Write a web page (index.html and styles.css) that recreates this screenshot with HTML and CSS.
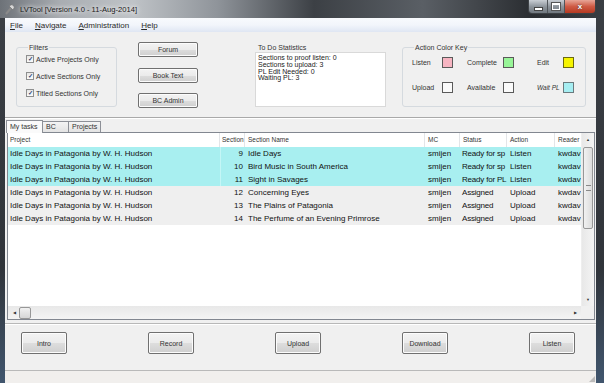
FILE: index.html
```html
<html>
  <head>
    <title>LVTool</title>
    <link rel="stylesheet" href="styles.css">
  </head>
  <body>
    <div class="window">
      <div class="titlebar">
        <svg class="app-icon" width="10" height="11" viewBox="0 0 10 11">
          <path d="M1 10 L6 4" stroke="#8a8a8a" stroke-width="2"/>
          <path d="M4 2 L7 0.5 L9.5 3 L8 6 Z" fill="#d8d8d8" stroke="#6a6a6a" stroke-width="0.6"/>
        </svg>
        <span class="title">LVTool [Version 4.0 - 11-Aug-2014]</span>
        <div class="win-buttons">
          <span class="wb wb-min"><i></i></span>
          <span class="wb wb-max"><i></i></span>
          <span class="wb wb-close">x</span>
        </div>
      </div>

      <div class="menubar">
        <span><u>F</u>ile</span>
        <span><u>N</u>avigate</span>
        <span><u>A</u>dministration</span>
        <span><u>H</u>elp</span>
      </div>

      <div class="client">
        <div class="top-panel">
          <fieldset class="group filters">
            <legend>Filters</legend>
            <div class="check"><span class="box">&#10003;</span>Active Projects Only</div>
            <div class="check"><span class="box">&#10003;</span>Active Sections Only</div>
            <div class="check"><span class="box">&#10003;</span>Titled Sections Only</div>
          </fieldset>

          <div class="side-buttons">
            <button class="btn">Forum</button>
            <button class="btn">Book Text</button>
            <button class="btn">BC Admin</button>
          </div>

          <div class="stats">
            <div class="stats-title">To Do Statistics</div>
            <div class="stats-box">
              <div>Sections to proof listen: 0</div>
              <div>Sections to upload: 3</div>
              <div>PL Edit Needed: 0</div>
              <div>Waiting PL: 3</div>
            </div>
          </div>

          <fieldset class="group key">
            <legend>Action Color Key</legend>
            <div class="key-row">
              <div class="key-item k1"><span>Listen</span><span class="swatch pink"></span></div>
              <div class="key-item k2"><span>Complete</span><span class="swatch green"></span></div>
              <div class="key-item k3"><span>Edit</span><span class="swatch yellow"></span></div>
            </div>
            <div class="key-row">
              <div class="key-item k1"><span>Upload</span><span class="swatch white"></span></div>
              <div class="key-item k2"><span>Available</span><span class="swatch white"></span></div>
              <div class="key-item k3"><em>Wait PL</em><span class="swatch cyan"></span></div>
            </div>
          </fieldset>
        </div>

        <div class="tabs">
          <span class="tab active">My tasks</span>
          <span class="tab t-bc">BC</span>
          <span class="tab t-proj">Projects</span>
        </div>

        <div class="table-frame">
          <div class="list">
            <div class="row head">
              <span class="c c-proj">Project</span>
              <span class="c c-sec">Section</span>
              <span class="c c-name">Section Name</span>
              <span class="c c-mc">MC</span>
              <span class="c c-status">Status</span>
              <span class="c c-action">Action</span>
              <span class="c c-reader">Reader</span>
            </div>
            <div class="row cyan">
              <span class="c c-proj">Idle Days in Patagonia by W. H. Hudson</span>
              <span class="c c-sec">9</span>
              <span class="c c-name">Idle Days</span>
              <span class="c c-mc">smijen</span>
              <span class="c c-status">Ready for sp</span>
              <span class="c c-action">Listen</span>
              <span class="c c-reader">kwdav</span>
            </div>
            <div class="row cyan">
              <span class="c c-proj">Idle Days in Patagonia by W. H. Hudson</span>
              <span class="c c-sec">10</span>
              <span class="c c-name">Bird Music in South America</span>
              <span class="c c-mc">smijen</span>
              <span class="c c-status">Ready for sp</span>
              <span class="c c-action">Listen</span>
              <span class="c c-reader">kwdav</span>
            </div>
            <div class="row cyan">
              <span class="c c-proj">Idle Days in Patagonia by W. H. Hudson</span>
              <span class="c c-sec">11</span>
              <span class="c c-name">Sight in Savages</span>
              <span class="c c-mc">smijen</span>
              <span class="c c-status">Ready for PL</span>
              <span class="c c-action">Listen</span>
              <span class="c c-reader">kwdav</span>
            </div>
            <div class="row grey">
              <span class="c c-proj">Idle Days in Patagonia by W. H. Hudson</span>
              <span class="c c-sec">12</span>
              <span class="c c-name">Concerning Eyes</span>
              <span class="c c-mc">smijen</span>
              <span class="c c-status">Assigned</span>
              <span class="c c-action">Upload</span>
              <span class="c c-reader">kwdav</span>
            </div>
            <div class="row grey">
              <span class="c c-proj">Idle Days in Patagonia by W. H. Hudson</span>
              <span class="c c-sec">13</span>
              <span class="c c-name">The Plains of Patagonia</span>
              <span class="c c-mc">smijen</span>
              <span class="c c-status">Assigned</span>
              <span class="c c-action">Upload</span>
              <span class="c c-reader">kwdav</span>
            </div>
            <div class="row grey">
              <span class="c c-proj">Idle Days in Patagonia by W. H. Hudson</span>
              <span class="c c-sec">14</span>
              <span class="c c-name">The Perfume of an Evening Primrose</span>
              <span class="c c-mc">smijen</span>
              <span class="c c-status">Assigned</span>
              <span class="c c-action">Upload</span>
              <span class="c c-reader">kwdav</span>
            </div>
          </div>
          <div class="vscroll">
            <span class="arrow">&#9650;</span>
            <div class="vtrack"><div class="vthumb"><i></i></div></div>
            <span class="arrow">&#9660;</span>
          </div>
          <div class="hscroll">
            <span class="arrow">&#9664;</span>
            <div class="htrack"><div class="hthumb"></div></div>
            <span class="arrow">&#9654;</span>
          </div>
          <div class="corner"></div>
        </div>

        <div class="footer">
          <button class="btn big">Intro</button>
          <button class="btn big">Record</button>
          <button class="btn big">Upload</button>
          <button class="btn big">Download</button>
          <button class="btn big">Listen</button>
        </div>
      </div>

      <div class="statusbar"><span class="grip"></span></div>
    </div>
  </body>
</html>
```

FILE: styles.css
```css
body {
  margin: 0;
  background: #2b2f35;
  font-family: "Liberation Sans", Arial, sans-serif;
}

.window {
  width: 604px;
  height: 383px;
  display: flex;
  flex-direction: column;
  background: linear-gradient(to bottom, #3b3f45 0%, #30343a 70%, #41566e 100%);
}

/* title bar */
.titlebar {
  height: 18px;
  display: flex;
  align-items: center;
  padding-left: 5px;
  background: linear-gradient(to right, #6d7278 0%, #a9adb2 10%, #bfc3c7 22%, #8f949a 36%, #3c4045 52%, #5a5f65 70%, #2a2d31 88%, #3a3e43 100%);
}
.app-icon {
  margin-right: 5px;
}
.title {
  font-size: 7.6px;
  color: #1a1a1a;
  text-shadow: 0 0 4px #fff, 0 0 6px #fff;
}
.win-buttons {
  margin-left: auto;
  margin-right: 8px;
  align-self: flex-start;
  display: flex;
  border: 1px solid #3e4246;
  border-top: none;
  border-radius: 0 0 4px 4px;
  overflow: hidden;
}
.wb {
  height: 13px;
  display: flex;
  align-items: center;
  justify-content: center;
  background: linear-gradient(#c9ced4, #8e959c 50%, #70777e);
  border-right: 1px solid #50555a;
}
.wb-min { width: 18px; }
.wb-max { width: 16px; }
.wb-min i {
  width: 7px;
  height: 2px;
  margin-top: 5px;
  background: #fff;
  border: 1px solid #444;
}
.wb-max i {
  width: 6px;
  height: 4px;
  border: 1px solid #fff;
  border-top-width: 2px;
  outline: 1px solid #555;
}
.wb-close {
  width: 30px;
  border-right: none;
  background: linear-gradient(#e7a597, #cf5a44 50%, #b63a22);
  color: #fff;
  font-size: 8px;
  font-weight: bold;
  text-shadow: 0 0 2px #333;
}

/* menu */
.menubar {
  height: 14px;
  margin: 0 8px 0 5px;
  display: flex;
  align-items: center;
  font-size: 8px;
  color: #2a2a2a;
  background: linear-gradient(#f8fafd, #f2f5fb 50%, #dfe6f3);
}
.menubar span {
  margin-left: 5px;
  margin-right: 7px;
}

/* client area */
.client {
  flex: 1;
  margin: 0 8px 0 5px;
  background: #f0f0f0;
  display: flex;
  flex-direction: column;
  font-size: 7px;
  color: #333;
}

.top-panel {
  height: 86px;
  box-sizing: border-box;
  padding: 11px 0 0 11px;
  display: flex;
  align-items: flex-start;
  border-bottom: 1px solid #a9a9a9;
  box-shadow: 0 1px 0 #fff;
}

.group {
  margin: 0;
  box-sizing: border-box;
  border: 1px solid #d5dadf;
  border-radius: 3px;
}
.group legend {
  font-size: 7px;
  line-height: 9px;
  padding: 0 1px;
  margin-left: 2px;
  color: #333;
}

.filters {
  width: 101px;
  height: 64px;
  padding: 2px 0 0 9px;
}
.check {
  height: 10px;
  display: flex;
  align-items: center;
  margin-bottom: 7px;
}
.box {
  width: 6px;
  height: 6px;
  border: 1px solid #8e8f8f;
  background: linear-gradient(#e6e6e6, #fbfbfb);
  margin-right: 2px;
  font-size: 6px;
  line-height: 6px;
  text-align: center;
  color: #2a3f73;
  font-weight: bold;
}

.side-buttons {
  margin: -1px 0 0 21px;
  display: flex;
  flex-direction: column;
  gap: 10.5px;
}
.btn {
  width: 60px;
  height: 15px;
  padding: 0;
  border: 1px solid #707070;
  border-radius: 2px;
  background: linear-gradient(#f3f3f3, #ebebeb 50%, #dddddd 51%, #cfcfcf);
  font-family: "Liberation Sans", Arial, sans-serif;
  font-size: 7px;
  color: #333;
  box-shadow: inset 0 0 0 1px #fcfcfc;
}

.stats {
  margin-left: 57px;
  width: 131px;
}
.stats-title {
  height: 9px;
  line-height: 9px;
  padding-left: 3px;
}
.stats-box {
  height: 55px;
  box-sizing: border-box;
  background: #fff;
  border: 1px solid #d9d9d9;
  padding: 2px 0 0 2px;
  line-height: 6.8px;
  font-size: 7px;
  color: #222;
}

.key {
  margin-left: 16px;
  width: 184px;
  height: 64px;
  padding: 5px 0 0 9px;
}
.key-row {
  display: flex;
  height: 11px;
  margin-bottom: 14px;
}
.key-item {
  display: flex;
  align-items: center;
  justify-content: space-between;
}
.k1 { width: 41px; margin-right: 14px; }
.k2 { width: 47px; margin-right: 23px; }
.k3 { width: 37px; }
.key-item em {
  font-size: 6.5px;
}
.swatch {
  width: 9px;
  height: 9px;
  border: 1px solid #5a5a5a;
}
.pink { background: #f7b5c2; }
.green { background: #98f598; }
.yellow { background: #f6f400; border-color: #6c6a10; }
.white { background: #fafafa; }
.cyan { background: #a6eef2; border-color: #6a7a7e; }

/* tabs */
.tabs {
  height: 14px;
  display: flex;
  align-items: flex-end;
  padding-left: 1px;
  position: relative;
  z-index: 1;
}
.tab {
  height: 10px;
  line-height: 10px;
  padding-left: 3px;
  border: 1px solid #8d9097;
  border-bottom: none;
  background: linear-gradient(#f4f4f4, #e3e3e3);
  font-size: 7px;
  color: #333;
}
.tab.active {
  width: 32px;
  height: 12px;
  line-height: 12px;
  background: #fafafa;
  margin-bottom: -1px;
}
.t-bc { width: 22px; border-left: none; }
.t-proj { width: 28px; border-left: none; }

/* grid */
.table-frame {
  height: 188px;
  margin: 0 1px 0 2px;
  box-sizing: border-box;
  border: 1px solid #828790;
  background: #fff;
  display: grid;
  grid-template-columns: 1fr 13px;
  grid-template-rows: 1fr 13px;
}
.list {
  overflow: hidden;
}
.row {
  display: flex;
  height: 13px;
  line-height: 13px;
  font-size: 8px;
  color: #111;
  white-space: nowrap;
}
.row.head {
  height: 14px;
  line-height: 13px;
  font-size: 6.5px;
  color: #333;
  background: #fff;
}
.row.head .c {
  border-right: 1px solid #e3e5e8;
}
.row.cyan { background: #a8eff0; }
.row.grey { background: #efefef; }
.c {
  overflow: hidden;
  box-sizing: border-box;
  flex: none;
}
.c-proj { width: 212px; padding-left: 2px; }
.c-sec { width: 25px; text-align: right; padding-right: 2px; }
.row.cyan .c-sec { border-left: 1px solid #c4f6f6; }
.c-name { width: 180px; padding-left: 3px; }
.c-mc { width: 35px; padding-left: 3px; }
.c-status { width: 47px; padding-left: 2px; letter-spacing: -0.2px; }
.c-action { width: 48px; padding-left: 3px; }
.c-reader { width: 27px; padding-left: 3px; }
.row.head .c-sec { text-align: left; padding: 0 0 0 2px; }
.row.head .c-status { letter-spacing: 0; padding-left: 3px; }
.row.head .c-reader { border-right: none; }

.vscroll {
  background: linear-gradient(to right, #e8e8e8, #f4f4f4);
  display: flex;
  flex-direction: column;
  border-left: 1px solid #eee;
}
.hscroll {
  background: linear-gradient(#e8e8e8, #f4f4f4);
  display: flex;
  align-items: center;
}
.arrow {
  font-size: 4px;
  color: #333;
  display: flex;
  align-items: center;
  justify-content: center;
  flex: none;
}
.vscroll .arrow { height: 13px; }
.hscroll .arrow { width: 12px; height: 13px; }
.vtrack {
  flex: 1;
  padding-top: 1px;
}
.vthumb {
  height: 80px;
  margin: 0 1px;
  border: 1px solid #979797;
  border-radius: 2px;
  background: linear-gradient(to right, #f1f1f1, #dcdcdc);
  display: flex;
  align-items: center;
  justify-content: center;
}
.vthumb i {
  width: 5px;
  height: 4px;
  border-top: 1px solid #888;
  border-bottom: 1px solid #888;
}
.htrack {
  flex: 1;
  height: 13px;
  display: flex;
  align-items: center;
}
.hthumb {
  width: 10px;
  height: 10px;
  margin-left: -1px;
  border: 1px solid #979797;
  border-radius: 2px;
  background: linear-gradient(#f1f1f1, #d6d6d6);
}
.corner {
  background: #f0f0f0;
}

/* bottom buttons */
.footer {
  margin-top: 3px;
  flex: 1;
  display: flex;
  align-items: flex-start;
  gap: 81px;
  padding: 8px 0 0 16px;
  border-top: 1px solid #b8b8b8;
  box-shadow: inset 0 1px 0 #fff;
}
.btn.big {
  width: 46px;
  height: 22px;
}

.statusbar {
  height: 13px;
  margin: 0 8px 0 5px;
  box-sizing: border-box;
  border-top: 1px solid #b9b9b9;
  background: #f1efed;
  position: relative;
}
.grip {
  position: absolute;
  right: 1px;
  bottom: 1px;
  width: 6px;
  height: 6px;
  background: radial-gradient(circle, #a0a0a0 0.6px, transparent 0.9px) 0 0 / 2px 2px;
  clip-path: polygon(100% 0, 100% 100%, 0 100%);
}
```
